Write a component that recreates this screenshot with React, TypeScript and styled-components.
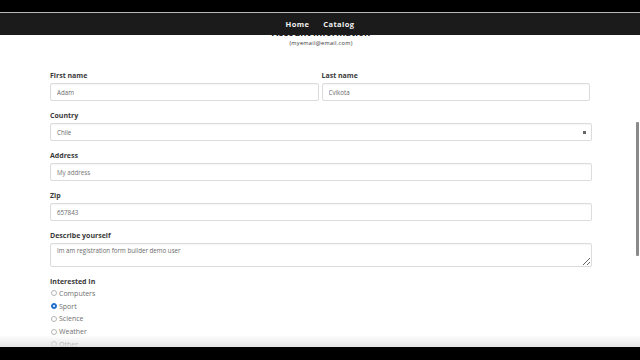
import React from "react";
import styled, { createGlobalStyle } from "styled-components";

const Global = createGlobalStyle`
  html, body { margin: 0; padding: 0; background: #000; }
  body { font-family: "Open Sans", "Liberation Sans", sans-serif; }
  * { box-sizing: border-box; }
`;

const Frame = styled.div`
  width: 640px;
  height: 360px;
  display: flex;
  flex-direction: column;
  background: #000;
  overflow: hidden;
`;

const Letterbox = styled.div<{ $h: number }>`
  height: ${(p) => p.$h}px;
  flex: none;
  background: #000;
`;

const Viewport = styled.div`
  position: relative;
  flex: 1;
  background: #fff;
  overflow: hidden;
`;

const Nav = styled.nav`
  position: absolute;
  top: 0;
  left: 0;
  right: 0;
  height: 23px;
  z-index: 2;
  background: #1b1b1b;
  border-top: 1px solid #b9b9b9;
  display: flex;
  justify-content: center;
  align-items: center;
  gap: 14px;
  padding-bottom: 1px;
`;

const NavLink = styled.a`
  color: #f2f2f2;
  font-size: 7.5px;
  font-weight: 700;
  letter-spacing: 0.4px;
  text-decoration: none;
`;

const Content = styled.main`
  padding: 15px 48px 0 50px;
`;

const Heading = styled.h2`
  margin: 0;
  text-align: center;
  font-size: 9.5px;
  line-height: 12px;
  font-weight: 700;
  color: #222;
  letter-spacing: 0;
`;

const Email = styled.div`
  margin-top: 0;
  text-align: center;
  font-size: 5.6px;
  line-height: 8px;
  color: #333;
  letter-spacing: 0.3px;
`;

const Form = styled.form`
  margin-top: 25px;
  display: flex;
  flex-direction: column;
  gap: 11px;
`;

const Row = styled.div`
  display: grid;
  grid-template-columns: 1fr 1fr;
  gap: 3px;
  padding-right: 2px;
`;

const Field = styled.div`
  display: flex;
  flex-direction: column;
`;

const Label = styled.label`
  font-size: 7px;
  line-height: 8px;
  font-weight: 700;
  color: #3a3a3a;
  margin-bottom: 3px;
`;

const inputBase = `
  width: 100%;
  border: 1px solid #dcdcdc;
  border-radius: 2px;
  background: #fff;
  box-shadow: inset 0 1px 1px rgba(0,0,0,0.04);
  font-family: "Open Sans", "Liberation Sans", sans-serif;
  font-size: 6.2px;
  color: #6a6a6a;
  padding: 0 6px;
  outline: none;
`;

const Input = styled.input`
  ${inputBase}
  height: 18px;
`;

const SelectBox = styled.div`
  ${inputBase}
  height: 18px;
  display: flex;
  align-items: center;
  justify-content: space-between;
  padding-right: 5px;
`;

const Caret = styled.span`
  width: 3px;
  height: 3px;
  background: #666;
`;

const TextArea = styled.textarea`
  ${inputBase}
  height: 24px;
  padding-top: 3px;
  line-height: 8px;
  resize: vertical;
`;

const RadioList = styled.div`
  display: flex;
  flex-direction: column;
  margin-top: -2px;
`;

const RadioRow = styled.div`
  display: flex;
  align-items: center;
  height: 12.75px;
  gap: 2px;
  font-size: 7px;
  color: #707070;
`;

const Dot = styled.span<{ $on?: boolean }>`
  width: 6px;
  height: 6px;
  margin-left: 1px;
  border-radius: 50%;
  border: 1px solid ${(p) => (p.$on ? "#1f6fd1" : "#b5b5b5")};
  background: ${(p) => (p.$on ? "#1f6fd1" : "#fff")};
  display: flex;
  align-items: center;
  justify-content: center;
  &::after {
    content: "";
    width: 2px;
    height: 2px;
    border-radius: 50%;
    background: ${(p) => (p.$on ? "#fff" : "transparent")};
  }
`;

const Fade = styled.div`
  position: absolute;
  left: 0;
  right: 0;
  bottom: 0;
  height: 12px;
  background: linear-gradient(to bottom, rgba(238,238,238,0), rgba(225,225,225,0.9));
  z-index: 1;
`;

const Thumb = styled.div`
  position: absolute;
  right: 1px;
  top: 110px;
  width: 3px;
  height: 134px;
  background: #8a8a8a;
  border-radius: 1px;
  z-index: 3;
`;

const interests = ["Computers", "Sport", "Science", "Weather", "Other"];

export default function App() {
  return (
    <Frame>
      <Global />
      <Letterbox $h={12} />
      <Viewport>
        <Nav>
          <NavLink href="#">Home</NavLink>
          <NavLink href="#">Catalog</NavLink>
        </Nav>
        <Content>
          <Heading>Account information</Heading>
          <Email>(myemail@email.com)</Email>
          <Form>
            <Row>
              <Field>
                <Label>First name</Label>
                <Input defaultValue="Adam" />
              </Field>
              <Field>
                <Label>Last name</Label>
                <Input defaultValue="Cvikota" />
              </Field>
            </Row>
            <Field>
              <Label>Country</Label>
              <SelectBox>
                <span>Chile</span>
                <Caret />
              </SelectBox>
            </Field>
            <Field>
              <Label>Address</Label>
              <Input placeholder="My address" />
            </Field>
            <Field>
              <Label>Zip</Label>
              <Input defaultValue="657843" />
            </Field>
            <Field>
              <Label>Describe yourself</Label>
              <TextArea defaultValue="Im am registration form builder demo user" />
            </Field>
            <Field>
              <Label>Interested In</Label>
              <RadioList>
                {interests.map((i) => (
                  <RadioRow key={i}>
                    <Dot $on={i === "Sport"} />
                    <span>{i}</span>
                  </RadioRow>
                ))}
              </RadioList>
            </Field>
          </Form>
        </Content>
        <Fade />
        <Thumb />
      </Viewport>
      <Letterbox $h={13} />
    </Frame>
  );
}
